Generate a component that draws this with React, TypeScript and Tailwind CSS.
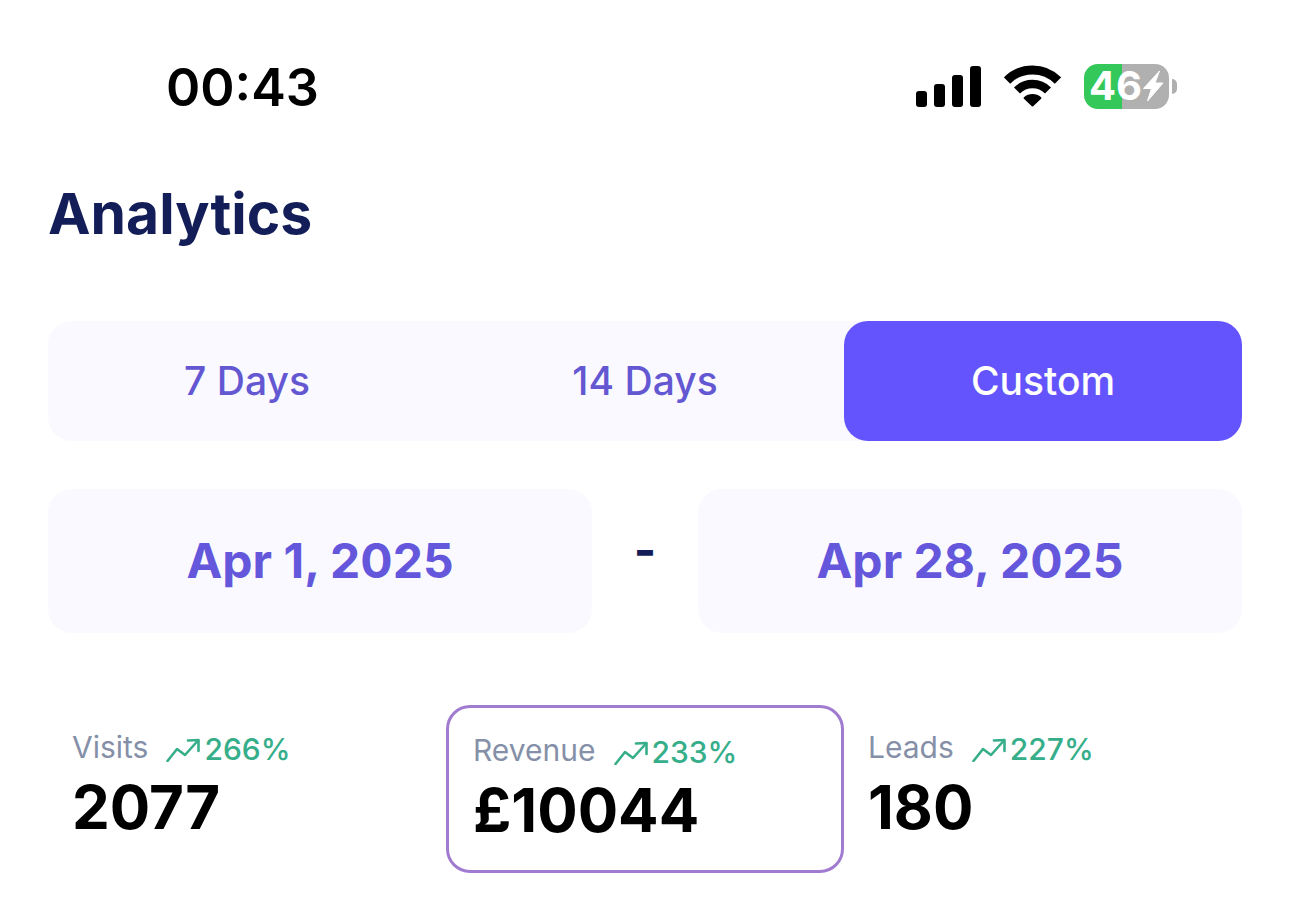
import { useState } from 'react';
import clsx from 'clsx';

const ranges = ['7 Days', '14 Days', 'Custom'];

const stats = [
  { id: 'visits', label: 'Visits', value: '2077', change: '266%' },
  { id: 'revenue', label: 'Revenue', value: '£10044', change: '233%' },
  { id: 'leads', label: 'Leads', value: '180', change: '227%' },
];

const SignalIcon = () => (
  <svg width="65" height="42" viewBox="0 0 65 42" aria-hidden="true">
    <rect x="0" y="26" width="11" height="16" rx="3" />
    <rect x="18" y="19" width="11" height="23" rx="3" />
    <rect x="36" y="10" width="11" height="32" rx="3" />
    <rect x="54" y="1" width="11" height="41" rx="3" />
  </svg>
);

const WifiIcon = () => (
  <svg width="57" height="42" viewBox="0 0 57 42" aria-hidden="true">
    <path d="M3 15.5A36 36 0 0 1 54 15.5" fill="none" stroke="#000" strokeWidth="9" />
    <path d="M13 25.5A22 22 0 0 1 44 25.5" fill="none" stroke="#000" strokeWidth="8.5" />
    <path
      d="M28.5 40.5L20.6 33A12 12 0 0 1 36.4 33Z"
      stroke="#000"
      strokeWidth="2"
      strokeLinejoin="round"
    />
  </svg>
);

const Battery = () => (
  <div className="flex items-center gap-[3px]">
    <div className="flex h-[45px] w-[85px] items-center justify-center rounded-[14px] bg-linear-to-r from-[#34c759] from-45% to-[#b0b0b0] to-45% text-white">
      <span className="text-[40px] leading-none font-bold">46</span>
      <svg width="22" height="32" viewBox="0 0 22 32" fill="currentColor" aria-hidden="true">
        <path
          d="M17.5 1L1.5 18.5H9.5L5.5 31L21 13H13Z"
          stroke="currentColor"
          strokeWidth="1"
          strokeLinejoin="round"
        />
      </svg>
    </div>
    <div className="h-[15px] w-[5px] rounded-r-full bg-[#b0b0b0]" />
  </div>
);

const TrendIcon = () => (
  <svg
    width="34"
    height="26"
    viewBox="0 0 34 26"
    fill="none"
    stroke="currentColor"
    strokeWidth="2.6"
    strokeLinecap="round"
    strokeLinejoin="round"
    aria-hidden="true"
  >
    <path d="M1.5 25L11 13L19 19L32 4.5" />
    <path d="M22 4.5L32.5 4L32.5 15" />
  </svg>
);

export default function App() {
  const [range, setRange] = useState('Custom');
  const [selected, setSelected] = useState('revenue');

  return (
    <div className="min-h-screen bg-white pt-[60px] font-['Inter',sans-serif] text-black">
      {/* Status bar */}
      <header className="flex items-center justify-between pr-[113px] pl-[166px]">
        <time className="text-[52px] leading-[56px] font-semibold">00:43</time>
        <div className="flex items-center gap-[23px] pb-1">
          <SignalIcon />
          <WifiIcon />
          <Battery />
        </div>
      </header>

      <main className="px-12 pb-10">
        <h1 className="mt-[62px] text-[57px] leading-[72px] font-bold text-[#131e58]">
          Analytics
        </h1>

        {/* Range selector */}
        <div className="mt-[71px] grid grid-cols-3 rounded-3xl bg-[#faf9ff]">
          {ranges.map((item) => (
            <button
              key={item}
              type="button"
              aria-pressed={range === item}
              onClick={() => setRange(item)}
              className={clsx(
                'h-[120px] cursor-pointer rounded-3xl text-[39px] font-medium',
                range === item ? 'bg-[#6454fd] text-white' : 'text-[#6457d2]',
              )}
            >
              {item}
            </button>
          ))}
        </div>

        {/* Dates */}
        <div className="mt-12 flex items-center text-5xl font-bold text-[#6457dc]">
          <button type="button" className="h-36 flex-1 cursor-pointer rounded-3xl bg-[#faf9ff]">
            Apr 1, 2025
          </button>
          <span className="w-[106px] pb-[22px] text-center text-[#131e58]">-</span>
          <button type="button" className="h-36 flex-1 cursor-pointer rounded-3xl bg-[#faf9ff]">
            Apr 28, 2025
          </button>
        </div>

        {/* Stats */}
        <div className="mt-[72px] grid grid-cols-3 items-start">
          {stats.map((stat) => (
            <button
              key={stat.id}
              type="button"
              onClick={() => setSelected(stat.id)}
              className={clsx(
                'cursor-pointer rounded-3xl p-6 text-left',
                selected === stat.id && 'border-3 border-[#a17bd0]',
              )}
            >
              <span className="flex items-start text-[30px]">
                <span className="leading-9 text-[#8590a8]">{stat.label}</span>
                <span className="ml-[18px] flex items-center gap-1 leading-10 font-medium text-[#36ae8a]">
                  <TrendIcon />
                  {stat.change}
                </span>
              </span>
              <span className="mt-0.5 block text-[60px] leading-[72px] font-bold">{stat.value}</span>
            </button>
          ))}
        </div>
      </main>
    </div>
  );
}
